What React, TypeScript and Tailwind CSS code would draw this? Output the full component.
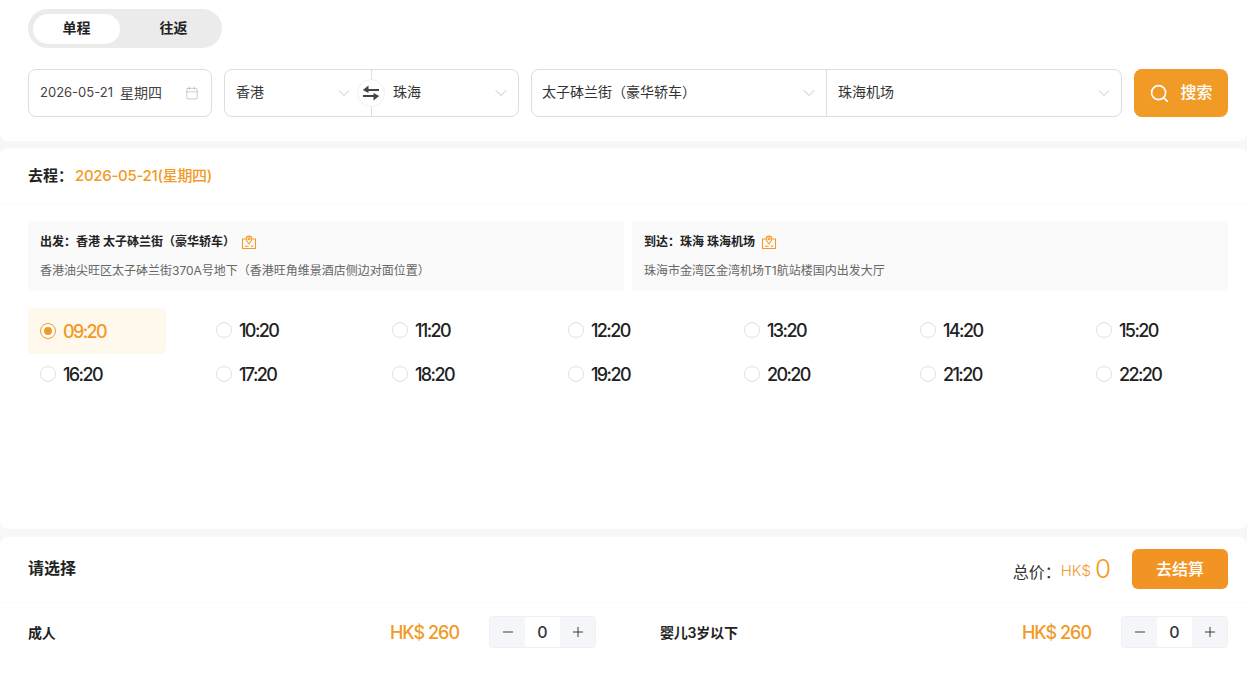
import { ChevronDown, Minus, Plus, Search, Calendar } from "lucide-react";

const times = [
  "09:20", "10:20", "11:20", "12:20", "13:20", "14:20", "15:20",
  "16:20", "17:20", "18:20", "19:20", "20:20", "21:20", "22:20",
];

function PinMap() {
  return (
    <svg width="16" height="16" viewBox="0 0 16 16" fill="none" stroke="#f29a26" strokeWidth="1.100" className="shrink-0">
      <path d="M4.800 5H1.500V14.500H14.500V5H11.200" />
      <path d="M8 10C6.300 8.100 5.200 6.700 5.200 4.900a2.800 2.800 0 0 1 5.600 0c0 1.800-1.100 3.200-2.800 5.100Z" />
      <circle cx="8" cy="4.800" r="1" />
      <path d="M4 12.300h3.500M10 11.800l2 .8" />
    </svg>
  );
}

function Field({ text, className }: { text: string; className: string }) {
  return (
    <div className={`flex items-center justify-between ${className}`}>
      <span className="pb-1 text-[14px] text-[#333]">{text}</span>
      <ChevronDown size={20} strokeWidth={1} className="text-[#bbb]" />
    </div>
  );
}

function Stepper() {
  return (
    <div className="flex h-8 w-[107px] overflow-hidden rounded border border-[#f0f0f0] text-[#333]">
      <div className="flex w-[35px] items-center justify-center bg-[#f5f6fa]"><Minus size={16} strokeWidth={1.400} /></div>
      <div className="flex flex-1 items-center justify-center text-[16px] font-medium">0</div>
      <div className="flex w-[35px] items-center justify-center bg-[#f5f6fa]"><Plus size={16} strokeWidth={1.400} /></div>
    </div>
  );
}

function Ticket({ name }: { name: string }) {
  return (
    <div className="flex h-8 flex-1 items-center">
      <span className="text-[14px] font-semibold tracking-[-0.2px] text-[#222]">{name}</span>
      <span className="ml-auto mr-[30px] text-[18px] font-medium tracking-[-1px] text-[#f29a26]">HK$ 260</span>
      <Stepper />
    </div>
  );
}

export default function App() {
  return (
    <div className="flex h-[693px] flex-col bg-[#f7f7f7] font-['Inter','Noto_Sans_CJK_SC',sans-serif] text-[#222]">
      <div className="h-[141px] rounded-b-lg bg-white pl-[28px] pr-[19px] pt-[9px]">
        <div className="flex h-[39px] w-[194px] items-center rounded-full bg-[#ebebeb] px-[5px]">
          <div className="flex h-[30px] w-[87px] items-center justify-center rounded-full bg-white pb-[2px] text-[14px] font-bold">单程</div>
          <div className="flex flex-1 items-center justify-center pb-[2px] pl-[10px] text-[14px] font-bold">往返</div>
        </div>
        <div className="mt-[21px] flex h-12 gap-3">
          <div className="flex w-[184px] items-center justify-between rounded-lg border border-[#dedede] pl-[11px] pr-[12px] text-[13px] text-[#444]">
            <span className="flex items-center gap-[7px]">
              2026-05-21
              <span className="pb-[2px] text-[14px]">星期四</span>
            </span>
            <Calendar size={14} strokeWidth={1} className="text-[#aaa]" />
          </div>
          <div className="relative flex w-[295px] rounded-lg border border-[#dedede]">
            <Field text="香港" className="w-[147px] border-r border-[#dedede] pl-[11px] pr-[17px]" />
            <Field text="珠海" className="flex-1 pl-[21px] pr-[7px]" />
            <div className="absolute left-[132px] top-[9px] flex h-7 w-7 items-center justify-center rounded-full border border-[#f0f0f0] bg-white">
              <svg width="20" height="18" viewBox="0 0 20 18" fill="#444" stroke="none">
                <path d="M7.500 1.500 1.800 6l5.700 3V7H18V5H7.500Z" />
                <path d="M12.500 9l5.700 3-5.700 4.500V13H2v-2h10.500Z" />
              </svg>
            </div>
          </div>
          <div className="flex w-[591px] rounded-lg border border-[#dedede]">
            <Field text="太子砵兰街（豪华轿车）" className="w-[295px] border-r border-[#dedede] pl-[10px] pr-[7px]" />
            <Field text="珠海机场" className="flex-1 pl-[11px] pr-[7px]" />
          </div>
          <div className="flex w-[94px] items-center justify-center gap-[10px] rounded-lg bg-[#f29a26] text-[16px] font-medium text-white">
            <Search size={21} strokeWidth={1.800} className="mt-[1px]" />
            <span className="pb-[3px]">搜索</span>
          </div>
        </div>
      </div>

      <div className="mt-[7px] h-[381px] rounded-lg bg-white">
        <div className="flex h-[57px] items-center border-b border-[#fafafa] pl-[28px] pr-[19px] text-[15px] font-semibold">
          去程：<span className="ml-[2px] font-medium tracking-[-0.3px] text-[#f29a26]">2026-05-21(星期四)</span>
        </div>
        <div className="mt-[16px] flex gap-2 pl-[28px] pr-[19px]">
          <div className="h-[70px] flex-1 rounded bg-[#fafafa] pl-3 pt-[12px]">
            <div className="flex items-center gap-[6px] text-[12px] font-semibold text-[#222]">
              <span>出发：香港 太子砵兰街（豪华轿车）</span>
              <PinMap />
            </div>
            <div className="mt-[11px] text-[12px] text-[#666]">香港油尖旺区太子砵兰街370A号地下（香港旺角维景酒店侧边对面位置）</div>
          </div>
          <div className="h-[70px] flex-1 rounded bg-[#fafafa] pl-3 pt-[12px]">
            <div className="flex items-center gap-[6px] text-[12px] font-semibold text-[#222]">
              <span>到达：珠海 珠海机场</span>
              <PinMap />
            </div>
            <div className="mt-[11px] text-[12px] text-[#666]">珠海市金湾区金湾机场T1航站楼国内出发大厅</div>
          </div>
        </div>
        <div className="mt-[17px] grid grid-cols-[repeat(7,138px)] gap-x-[38px] gap-y-0 pl-[28px]">
          {times.map((t, i) => (
            <div key={t} className={`flex h-[44px] items-center gap-[7px] rounded pl-3 ${i === 0 ? "mb-[-2px] h-[46px] bg-[#fff8ec]" : ""}`}>
              {i === 0 ? (
                <span className="flex h-4 w-4 items-center justify-center rounded-full border border-[#f29a26] bg-white">
                  <span className="h-2 w-2 rounded-full bg-[#f29a26]" />
                </span>
              ) : (
                <span className="h-4 w-4 rounded-full border border-[#e2e2e2] bg-white" />
              )}
              <span className={`text-[18px] font-medium tracking-[-1.6px] ${i === 0 ? "text-[#f29a26]" : "text-[#222]"}`}>{t}</span>
            </div>
          ))}
        </div>
      </div>

      <div className="mt-[8px] flex-1 rounded-t-lg bg-white">
        <div className="flex h-[66px] items-center justify-between border-b border-[#fafafa] pb-[2px] pl-[28px] pr-[19px]">
          <span className="pb-[2px] text-[16px] font-semibold">请选择</span>
          <div className="flex items-center">
            <span className="mt-[6px] text-[16px] text-[#333]">总价：</span>
            <span className="mt-[6px] text-[15px] font-light text-[#f29a26]">HK$</span>
            <span className="ml-[4px] text-[26px] font-light leading-none text-[#f29a26]">0</span>
            <div className="ml-[21px] flex h-10 w-24 items-center justify-center rounded-md bg-[#f29423] text-[16px] font-medium text-white">去结算</div>
          </div>
        </div>
        <div className="mt-[13px] flex gap-[64px] pl-[28px] pr-[19px]">
          <Ticket name="成人" />
          <Ticket name="婴儿3岁以下" />
        </div>
      </div>
    </div>
  );
}
